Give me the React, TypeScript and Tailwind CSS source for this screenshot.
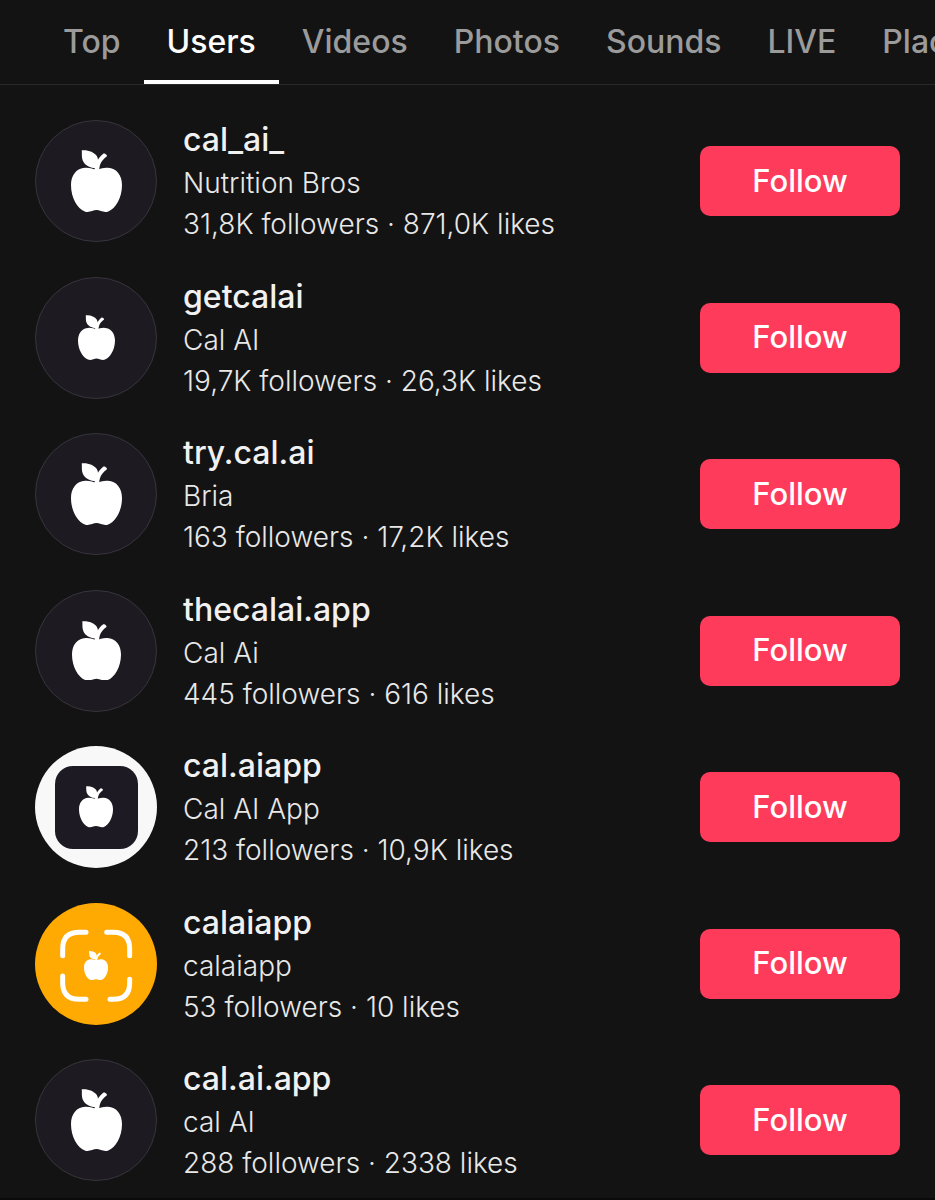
import React from "react";
import { clsx } from "clsx";

type AvatarKind = "large" | "medium" | "small" | "tile" | "scan";

const tabs = ["Top", "Users", "Videos", "Photos", "Sounds", "LIVE", "Places"];

const users: {
  handle: string;
  name: string;
  followers: string;
  likes: string;
  avatar: AvatarKind;
}[] = [
  { handle: "cal_ai_", name: "Nutrition Bros", followers: "31,8K", likes: "871,0K", avatar: "large" },
  { handle: "getcalai", name: "Cal AI", followers: "19,7K", likes: "26,3K", avatar: "small" },
  { handle: "try.cal.ai", name: "Bria", followers: "163", likes: "17,2K", avatar: "large" },
  { handle: "thecalai.app", name: "Cal Ai", followers: "445", likes: "616", avatar: "medium" },
  { handle: "cal.aiapp", name: "Cal AI App", followers: "213", likes: "10,9K", avatar: "tile" },
  { handle: "calaiapp", name: "calaiapp", followers: "53", likes: "10", avatar: "scan" },
  { handle: "cal.ai.app", name: "cal AI", followers: "288", likes: "2338", avatar: "large" },
];

function Apple({ className }: { className: string }) {
  return (
    <svg viewBox="0 0 152 186" fill="currentColor" className={className} aria-hidden="true">
      {/* leaf */}
      <path d="M32 1C50-1 69 6 77 18C83 28 82 42 73 54C54 53 40 44 35 31C31 21 33 11 32 1Z" />
      {/* stem */}
      <path d="M70 62C70 50 74 39 79 31C84 23 89 16 96 11C100 8 109 15 107 19C97 26 89 36 86 46C85 51 84 55 84 62Z" />
      {/* body */}
      <path d="M76 58C66 58 57 52 42 53C16 54 0 76 0 104C0 142 19 175 41 183C54 188 65 179 76 179C87 179 98 188 111 183C133 175 152 142 152 104C152 76 136 54 110 53C95 52 86 58 76 58Z" />
    </svg>
  );
}

function Avatar({ kind }: { kind: AvatarKind }) {
  if (kind === "tile") {
    return (
      <div className="flex size-[122px] shrink-0 items-center justify-center rounded-full bg-[#f8f8f9]">
        <div className="flex size-[83px] items-center justify-center rounded-[18px] bg-[#1d1a23] text-white">
          <Apple className="w-[34px]" />
        </div>
      </div>
    );
  }

  if (kind === "scan") {
    return (
      <div className="size-[122px] shrink-0 overflow-hidden rounded-full bg-[#ffa903] text-white">
        <div className="grid size-full place-items-center">
          <svg
            viewBox="0 0 366 366"
            fill="none"
            stroke="currentColor"
            strokeWidth="15"
            strokeLinecap="round"
            className="col-start-1 row-start-1 size-full"
            aria-hidden="true"
          >
            <path d="M83 158V138Q83 88 133 88H153M215 88H235Q284 88 284 138V158M284 229V240Q284 289 235 289H225M153 289H133Q83 289 83 240V219" />
          </svg>
          <Apple className="col-start-1 row-start-1 mt-1 w-6" />
        </div>
      </div>
    );
  }

  return (
    <div className="flex size-[122px] shrink-0 items-center justify-center rounded-full border border-[#37343b] bg-[#1d1a22] text-white">
      <Apple
        className={clsx(
          kind === "large" && "w-[51px]",
          kind === "medium" && "w-[49px]",
          kind === "small" && "w-[37px]",
        )}
      />
    </div>
  );
}

export default function App() {
  const [active, setActive] = React.useState("Users");

  return (
    <div className="flex min-h-screen flex-col overflow-hidden border-b-2 border-[#0a0a0a] bg-[#131313] font-['Inter',sans-serif] text-[#f1f1f1]">
      <nav className="flex overflow-hidden border-b border-[#292929] pl-10">
        {tabs.map((tab) => (
          <button
            key={tab}
            type="button"
            onClick={() => setActive(tab)}
            className={clsx(
              "h-[84px] shrink-0 border-b-4 px-[23px] pt-1 text-[32px] leading-10 font-medium",
              tab === active ? "border-white text-white" : "border-transparent text-[#9b9b9b]",
            )}
          >
            {tab}
          </button>
        ))}
      </nav>

      <ul className="flex flex-1 flex-col justify-between gap-7 px-[35px] pt-8 pb-[14px]">
        {users.map((user) => (
          <li key={user.handle} className="flex items-center">
            <Avatar kind={user.avatar} />
            <div className="ml-[26px] min-w-0 flex-1">
              <h2 className="text-[32px] leading-[46px] font-medium">{user.handle}</h2>
              <p className="text-[28px] leading-[41px] font-light text-[#e8e8e8]">{user.name}</p>
              <p className="text-[28px] leading-[41px] font-light text-[#e8e8e8]">
                {user.followers} followers · {user.likes} likes
              </p>
            </div>
            <button
              type="button"
              className="h-[70px] w-[200px] shrink-0 rounded-[10px] bg-[#ff3b5c] text-[31px] font-medium text-white"
            >
              Follow
            </button>
          </li>
        ))}
      </ul>
    </div>
  );
}
